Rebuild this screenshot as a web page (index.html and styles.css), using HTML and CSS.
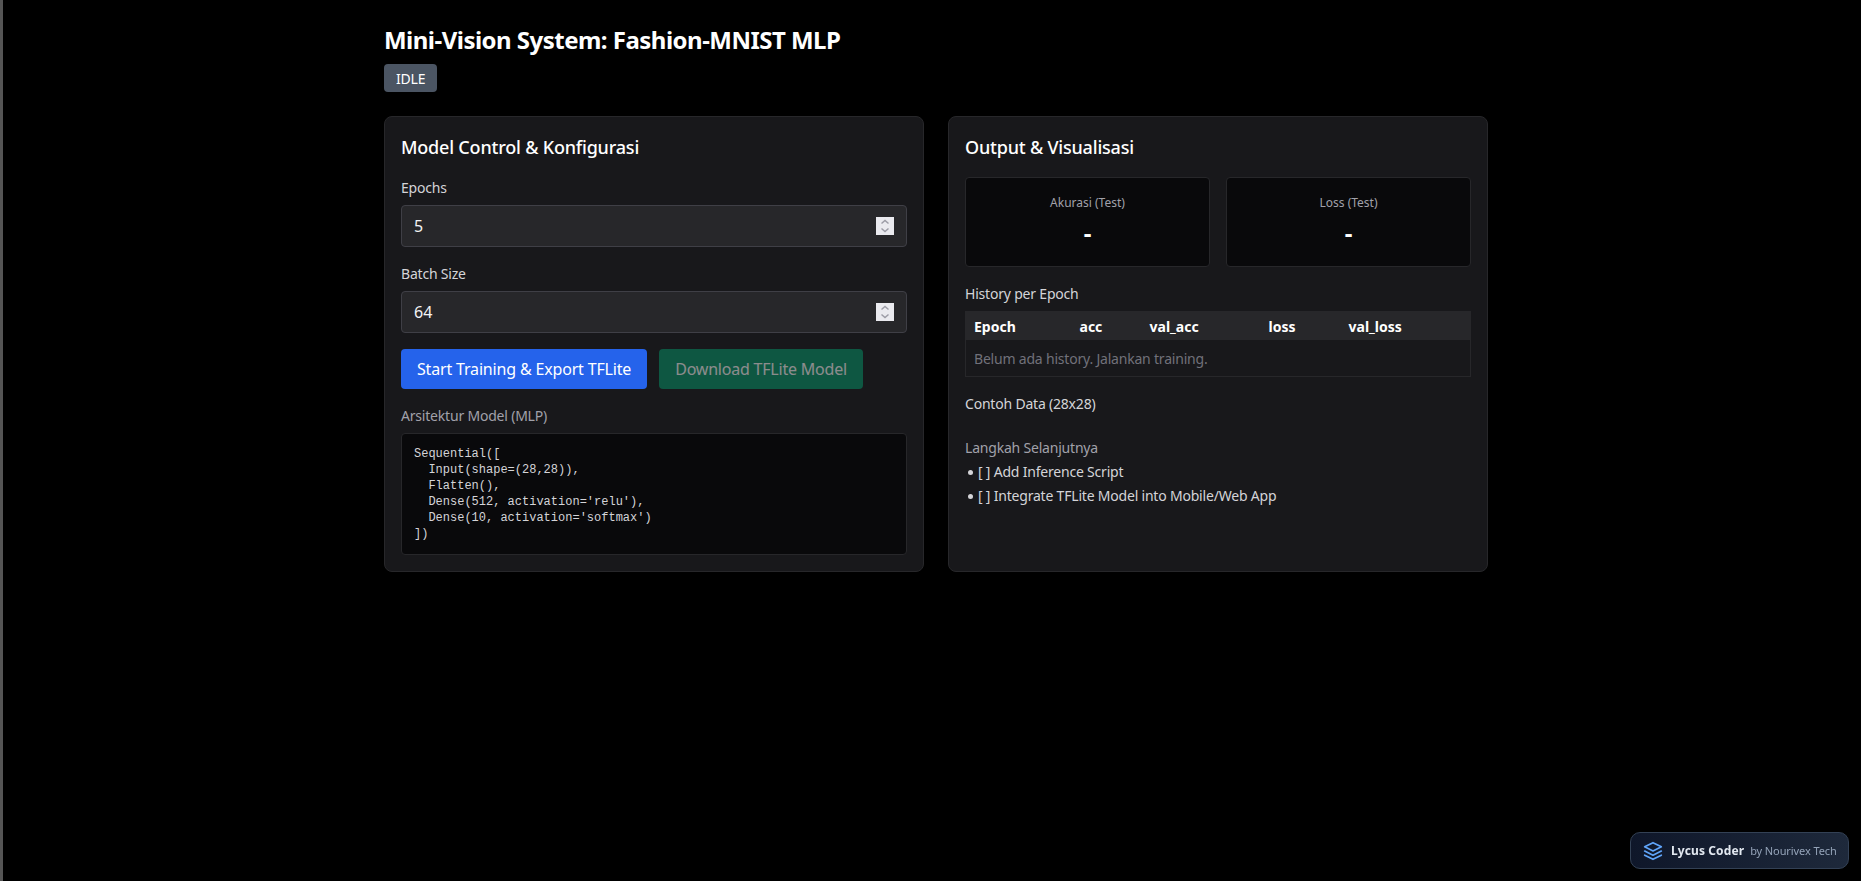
FILE: index.html
```html
<!DOCTYPE html>
<html lang="id">
<head>
<meta charset="utf-8">
<title>Mini-Vision System</title>
<link rel="stylesheet" href="styles.css">
</head>
<body>
<main class="page">
  <header class="head">
    <h1 class="title">Mini-Vision System: Fashion-MNIST MLP</h1>
    <span class="status">IDLE</span>
  </header>
  <div class="cols">
    <section class="card">
      <h2 class="card-title">Model Control &amp; Konfigurasi</h2>
      <label class="field-label" for="epochs">Epochs</label>
      <div class="field-wrap">
        <input class="field" id="epochs" type="number" value="5">
        <svg class="spin" viewBox="0 0 18 18" aria-hidden="true"><path d="M5.5 6.5 9 3.5l3.500 3M5.500 11.500 9 14.500l3.500-3"/></svg>
      </div>
      <label class="field-label field-gap" for="batch">Batch Size</label>
      <div class="field-wrap">
        <input class="field" id="batch" type="number" value="64">
        <svg class="spin" viewBox="0 0 18 18" aria-hidden="true"><path d="M5.5 6.5 9 3.5l3.500 3M5.500 11.500 9 14.500l3.500-3"/></svg>
      </div>
      <div class="actions">
        <button class="btn btn-primary" type="button">Start Training &amp; Export TFLite</button>
        <button class="btn btn-success" type="button" disabled>Download TFLite Model</button>
      </div>
      <p class="arch-label">Arsitektur Model (MLP)</p>
      <pre class="code">Sequential([
  Input(shape=(28,28)),
  Flatten(),
  Dense(512, activation='relu'),
  Dense(10, activation='softmax')
])</pre>
    </section>
    <section class="card">
      <h2 class="card-title">Output &amp; Visualisasi</h2>
      <div class="stats">
        <div class="stat"><div class="stat-label">Akurasi (Test)</div><div class="stat-value">-</div></div>
        <div class="stat"><div class="stat-label">Loss (Test)</div><div class="stat-value">-</div></div>
      </div>
      <p class="sub">History per Epoch</p>
      <table class="hist">
        <colgroup><col class="c1"><col class="c2"><col class="c3"><col class="c4"><col class="c5"></colgroup>
        <thead><tr><th>Epoch</th><th>acc</th><th>val_acc</th><th>loss</th><th>val_loss</th></tr></thead>
        <tbody><tr><td colspan="5">Belum ada history. Jalankan training.</td></tr></tbody>
      </table>
      <p class="sub sample">Contoh Data (28x28)</p>
      <p class="next">Langkah Selanjutnya</p>
      <ul class="todo">
        <li>[ ] Add Inference Script</li>
        <li>[ ] Integrate TFLite Model into Mobile/Web App</li>
      </ul>
    </section>
  </div>
</main>
<aside class="brand">
  <svg class="brand-icon" viewBox="0 0 24 24" fill="none" stroke="currentColor" stroke-width="2" stroke-linecap="round" stroke-linejoin="round" aria-hidden="true">
    <path d="M12 2 2 7l10 5 10-5-10-5z"/>
    <path d="m2 12 10 5 10-5"/>
    <path d="m2 17 10 5 10-5"/>
  </svg>
  <strong class="brand-name">Lycus Coder</strong>
  <span class="brand-by">by Nourivex Tech</span>
</aside>
</body>
</html>
```
FILE: styles.css
```css
* { box-sizing: border-box; }
html, body { height: 100%; }
body {
  margin: 0;
  background: #000;
  color: #f4f4f5;
  font-family: "Noto Sans", sans-serif;
  font-size: 14px;
  line-height: 20px;
  letter-spacing: -0.2px;
  border-left: 3px solid #555;
  overflow: hidden;
}
.page { width: 1104px; margin-left: 381px; padding-top: 24px; }
.head { margin-bottom: 24px; }
.title { margin: 0 0 8px; font-size: 24px; line-height: 32px; font-weight: 700; color: #fff; letter-spacing: -0.52px; }
.status {
  display: inline-block;
  height: 28px;
  padding: 5px 12px 3px;
  border-radius: 4px;
  background: #4b5563;
  color: #fff;
  font-size: 14px;
  vertical-align: top;
}
.cols { display: grid; grid-template-columns: 1fr 1fr; gap: 24px; }
.card {
  display: flex;
  flex-direction: column;
  height: 456px;
  padding: 16px;
  background: #18181b;
  border: 1px solid #27272a;
  border-radius: 8px;
}
.card-title { margin: 0 0 16px; font-size: 18px; line-height: 28px; font-weight: 500; color: #fff; }
.field-label { display: block; padding-top: 1px; margin-bottom: 7px; color: #d4d4d8; }
.field-gap { margin-top: 16px; }
.field-wrap { position: relative; }
.field {
  display: block;
  width: 100%;
  height: 42px;
  padding: 8px 12px;
  background: #27272a;
  border: 1px solid #3f3f46;
  border-radius: 4px;
  color: #f4f4f5;
  font: 16px/24px "Noto Sans", sans-serif;
  letter-spacing: normal;
  appearance: textfield;
}
.field::-webkit-inner-spin-button { appearance: none; margin: 0; }
.spin {
  position: absolute;
  top: 12px;
  right: 13px;
  width: 18px;
  height: 18px;
  background: #eaeaef;
  fill: none;
  stroke: #9c9ca6;
  stroke-width: 1.5;
  pointer-events: none;
}
.actions { display: flex; gap: 12px; margin-top: 16px; }
.btn {
  height: 40px;
  padding: 0 16px;
  border: 0;
  border-radius: 4px;
  font: 16px/24px "Noto Sans", sans-serif;
  letter-spacing: -0.17px;
  color: #fff;
}
.btn-primary { background: #2563eb; }
.btn-success { background: #059669; opacity: .5; letter-spacing: -0.21px; }
.arch-label { margin: 16px 0 7px; padding-top: 1px; color: #a1a1aa; }
.code {
  margin: 0;
  height: 122px;
  padding: 12px;
  background: #09090b;
  border: 1px solid #27272a;
  border-radius: 4px;
  color: #d4d4d8;
  font: 12px/16px "Liberation Mono", monospace;
  letter-spacing: normal;
}
.stats { display: grid; grid-template-columns: 1fr 1fr; gap: 16px; }
.stat {
  height: 90px;
  padding: 15px 16px;
  background: #09090b;
  border: 1px solid #27272a;
  border-radius: 4px;
  text-align: center;
}
.stat-label { font-size: 12px; line-height: 20px; color: #a1a1aa; letter-spacing: 0; }
.stat-value { margin-top: 4px; font-size: 24px; line-height: 32px; font-weight: 700; color: #fff; }
.sub { margin: 17px 0 7px; color: #d4d4d8; }
.hist { width: 100%; border-collapse: collapse; table-layout: fixed; border: 1px solid #27272a; }
.c1 { width: 106px; }
.c2 { width: 70px; }
.c3 { width: 119px; }
.c4 { width: 80px; }
.hist th {
  height: 28px;
  padding: 5px 8px 3px;
  background: #27272a;
  color: #fff;
  text-align: left;
  font-weight: 700;
  letter-spacing: 0;
}
.hist td { height: 36px; padding: 9px 8px 7px; color: #71717a; }
.sample { margin: 17px 0 0; }
.next { margin: 24px 0 2px; color: #a1a1aa; }
.todo { margin: 0; padding: 0 0 0 13px; color: #d4d4d8; list-style: none; }
.todo li { position: relative; height: 24px; line-height: 24px; }
.todo li::before {
  content: "";
  position: absolute;
  left: -10px;
  top: 10px;
  width: 5px;
  height: 5px;
  border-radius: 50%;
  background: #d4d4d8;
}
.brand {
  position: fixed;
  right: 12px;
  bottom: 12px;
  display: flex;
  align-items: center;
  width: 219px;
  height: 37px;
  padding: 0 12px;
  background: linear-gradient(90deg, #0f172a, #1e293b);
  border: 1px solid #334155;
  border-radius: 10px;
  font-size: 11px;
  white-space: nowrap;
  letter-spacing: 0;
}
.brand-icon { width: 20px; height: 20px; color: #60a5fa; flex: none; }
.brand-name { margin-left: 8px; font-size: 12px; font-weight: 700; color: #e2e8f0; letter-spacing: 0.1px; }
.brand-by { margin-left: 6px; color: #94a3b8; letter-spacing: -0.1px; }
```
